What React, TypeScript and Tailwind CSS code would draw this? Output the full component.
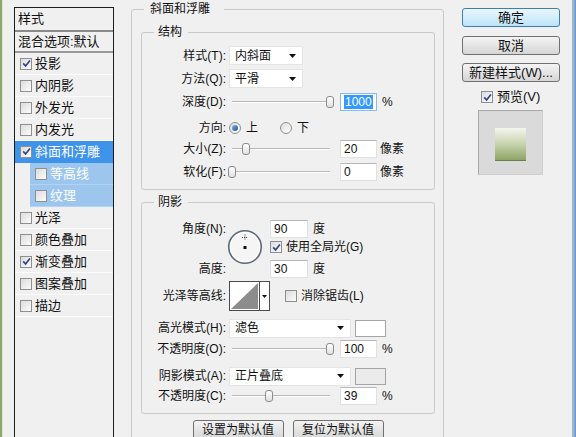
import React from "react";

const styleItems = [
    { name: "投影", checked: true },
    { name: "内阴影" },
    { name: "外发光" },
    { name: "内发光" },
    { name: "斜面和浮雕", checked: true, active: true },
    { name: "等高线", sub: true },
    { name: "纹理", sub: true },
    { name: "光泽" },
    { name: "颜色叠加" },
    { name: "渐变叠加", checked: true },
    { name: "图案叠加" },
    { name: "描边" },
];

function CheckBox({ checked = false }: { checked?: boolean }) {
    return (
        <span className="flex h-[12px] w-[12px] shrink-0 items-center justify-center border border-[#8e8f8f] bg-gradient-to-br from-[#dcdcdc] to-[#fcfcfc]">
            {checked && (
                <svg width="9" height="9" viewBox="0 0 9 9">
                    <path d="M1.2 4.4 L3.6 6.9 L7.9 1.4" fill="none" stroke="#31468c" strokeWidth="1.7" />
                </svg>
            )}
        </span>
    );
}

function Radio({ checked = false }: { checked?: boolean }) {
    return (
        <span className="flex h-[12px] w-[12px] shrink-0 items-center justify-center rounded-full border border-[#8e8f8f] bg-gradient-to-br from-[#dcdcdc] to-white">
            {checked && <span className="h-[6px] w-[6px] rounded-full bg-gradient-to-br from-[#7ab8ec] to-[#1b4f8c]" />}
        </span>
    );
}

function Slider({ value }: { value: number }) {
    const center = 3 + value * 98;
    return (
        <div className="relative h-[18px] w-[104px] shrink-0">
            <div className="absolute left-[3px] right-[3px] top-[8px] h-[2px] border-t border-b border-t-[#b8b8b8] border-b-white" />
            <div
                className="absolute top-[3px] h-[12px] w-[8px] rounded-[3px] border border-[#8c8c8c] bg-gradient-to-b from-white to-[#e0e0e0]"
                style={{ left: center - 4 }}
            />
        </div>
    );
}

function Select({ text, className }: { text: string; className: string }) {
    return (
        <div className={`flex h-[19px] items-center justify-between border border-[#e4e4e4] bg-white pl-[5px] pr-[6px] ${className}`}>
            <span>{text}</span>
            <svg width="7" height="4" viewBox="0 0 7 4">
                <path d="M0 0H7L3.5 4Z" fill="#111" />
            </svg>
        </div>
    );
}

function NumBox({ v, selected = false, className = "w-[37px]" }: { v: string; selected?: boolean; className?: string }) {
    return (
        <div
            className={`flex h-[18px] shrink-0 items-center border bg-white pl-[3px] ${
                selected ? "border-[#8cbbe8]" : "border-[#dde1e6] border-t-[#b5b7bc]"
            } ${className}`}
        >
            {selected ? <span className="bg-[#3399ff] px-[1px] leading-[14px] text-white">{v}</span> : v}
        </div>
    );
}

function Row({ label, className = "", children }: { label: string; className?: string; children?: React.ReactNode }) {
    return (
        <div className={`flex items-center ${className}`}>
            <span className="mr-[3px] w-[84px] shrink-0 text-right">{label}</span>
            {children}
        </div>
    );
}

function Btn({ children, primary = false, className = "" }: { children: React.ReactNode; primary?: boolean; className?: string }) {
    return (
        <div
            className={`flex items-center justify-center rounded-[3px] border ${
                primary
                    ? "border-[#3c7fb1] bg-gradient-to-b from-[#eaf6fd] to-[#bde4f8]"
                    : "border-[#707070] bg-gradient-to-b from-[#f4f4f4] to-[#d6d6d6]"
            } ${className}`}
        >
            {children}
        </div>
    );
}

function StyleList() {
    return (
        <div className="ml-[11px] mt-[7px] h-[440px] w-[100px] shrink-0 border-x border-t border-[#1c1c1c] bg-[#f0f0f0] text-[13px]">
            <div className="flex h-[24px] items-center border-b-2 border-[#8a8a8a] pl-[3px]">样式</div>
            <div className="flex h-[21px] items-center border-b-2 border-[#9a9a9a] pl-[3px]">混合选项:默认</div>
            {styleItems.map((item) =>
                item.sub ? (
                    <div key={item.name} className="flex h-[22px]">
                        <div className="ml-[15px] flex flex-1 items-center gap-[3px] border-b border-[#b4d2f2] bg-[#9cc6ee] pl-[5px] text-white">
                            <CheckBox />
                            <span>{item.name}</span>
                        </div>
                    </div>
                ) : (
                    <div
                        key={item.name}
                        className={`flex h-[22px] items-center gap-[3px] border-b pl-[5px] ${
                            item.active ? "border-[#3d94ea] bg-[#3d94ea] text-white" : "border-[#fbfbfb]"
                        }`}
                    >
                        <CheckBox checked={item.checked} />
                        <span>{item.name}</span>
                    </div>
                )
            )}
        </div>
    );
}

function Structure() {
    return (
        <fieldset className="mt-[9px] w-[294px] rounded-[3px] border border-[#c9c9c9] pb-[8px]">
            <legend className="ml-[12px] pl-[4px] pr-[6px] leading-[14px]">结构</legend>
            <Row label="样式(T):" className="mt-[7px] h-[19px]">
                <Select text="内斜面" className="w-[74px]" />
            </Row>
            <Row label="方法(Q):" className="mt-[4px] h-[19px]">
                <Select text="平滑" className="w-[74px]" />
            </Row>
            <Row label="深度(D):" className="mt-[5px] h-[18px]">
                <Slider value={1} />
                <NumBox v="1000" selected className="ml-[7px] w-[37px]" />
                <span className="ml-[5px]">%</span>
            </Row>
            <Row label="方向:" className="mt-[8px] h-[18px]">
                <Radio checked />
                <span className="ml-[5px]">上</span>
                <span className="ml-[22px]">
                    <Radio />
                </span>
                <span className="ml-[5px]">下</span>
            </Row>
            <Row label="大小(Z):" className="mt-[3px] h-[18px]">
                <Slider value={0.14} />
                <NumBox v="20" className="ml-[7px] w-[37px]" />
                <span className="ml-[3px]">像素</span>
            </Row>
            <Row label="软化(F):" className="mt-[5px] h-[18px]">
                <Slider value={0} />
                <NumBox v="0" className="ml-[7px] w-[37px]" />
                <span className="ml-[3px]">像素</span>
            </Row>
        </fieldset>
    );
}

function Shading() {
    return (
        <fieldset className="mt-[5px] w-[294px] rounded-[3px] border border-[#c9c9c9] pb-[8px]">
            <legend className="ml-[12px] pl-[4px] pr-[6px] leading-[14px]">阴影</legend>
            <div className="mt-[11px] flex h-[58px]">
                <div className="mr-[3px] flex w-[84px] flex-col justify-between text-right">
                    <span className="leading-[18px]">角度(N):</span>
                    <span className="leading-[18px]">高度:</span>
                </div>
                <div className="w-[41px]">
                    <svg className="ml-[-3px] mt-[8px]" width="38" height="38" viewBox="0 0 38 38">
                        <circle cx="19" cy="19" r="16.3" fill="#f5f5f5" stroke="#5d6a78" strokeWidth="1.6" />
                        <circle cx="19" cy="19" r="14.6" fill="none" stroke="#ffffff" strokeWidth="1" />
                        <path d="M19 6.5v6M16 9.5h6" stroke="#444" strokeWidth="1" strokeDasharray="1 1" />
                        <rect x="17.5" y="18" width="3" height="3" fill="#111" />
                    </svg>
                </div>
                <div className="flex flex-col">
                    <div className="flex h-[18px] items-center">
                        <NumBox v="90" className="w-[38px]" />
                        <span className="ml-[5px]">度</span>
                    </div>
                    <div className="mt-[3px] flex h-[12px] items-center gap-[4px]">
                        <CheckBox checked />
                        <span>使用全局光(G)</span>
                    </div>
                    <div className="mt-[7px] flex h-[18px] items-center">
                        <NumBox v="30" className="w-[38px]" />
                        <span className="ml-[5px]">度</span>
                    </div>
                </div>
            </div>
            <Row label="光泽等高线:" className="mt-[3px] h-[30px]">
                <div className="flex h-[30px] w-[41px] border border-[#4a4a4a] bg-white">
                    <svg width="29" height="28" viewBox="0 0 29 28">
                        <path d="M1 27 L28 1 L28 27Z" fill="#8c8c8c" />
                    </svg>
                    <div className="flex flex-1 items-center justify-center border-l border-[#4a4a4a]">
                        <svg width="5" height="3" viewBox="0 0 5 3">
                            <path d="M0 0H5L2.5 3Z" fill="#111" />
                        </svg>
                    </div>
                </div>
                <span className="ml-[15px]">
                    <CheckBox />
                </span>
                <span className="ml-[4px]">消除锯齿(L)</span>
            </Row>
            <Row label="高光模式(H):" className="mt-[7px] h-[20px]">
                <Select text="滤色" className="w-[122px]" />
                <div className="ml-[4px] h-[17px] w-[31px] border border-[#a5a5a5] bg-white" />
            </Row>
            <Row label="不透明度(O):" className="mt-[2px] h-[18px]">
                <Slider value={1} />
                <NumBox v="100" className="ml-[7px] w-[37px]" />
                <span className="ml-[5px]">%</span>
            </Row>
            <Row label="阴影模式(A):" className="mt-[8px] h-[20px]">
                <Select text="正片叠底" className="w-[122px]" />
                <div className="ml-[4px] h-[17px] w-[31px] border border-[#a5a5a5] bg-[#ebebeb]" />
            </Row>
            <Row label="不透明度(C):" className="mt-[1px] h-[18px]">
                <Slider value={0.38} />
                <NumBox v="39" className="ml-[7px] w-[37px]" />
                <span className="ml-[5px]">%</span>
            </Row>
        </fieldset>
    );
}

export default function App() {
    return (
        <div className="flex h-[437px] w-[576px] overflow-hidden bg-[#f0f0f0] font-['Liberation_Sans','Noto_Sans_CJK_SC',sans-serif] text-[12px] text-[#111]">
            <div className="w-[2px] shrink-0 bg-[#8ea66b]" />
            <div className="w-[1px] shrink-0 bg-[#dfe7d2]" />
            <StyleList />

            <fieldset className="ml-[17px] mt-[2px] h-[470px] w-[313px] shrink-0 rounded-[3px] border border-[#c9c9c9] pl-[9px] pr-[8px]">
                <legend className="ml-[3px] pl-[6px] pr-[14px] leading-[14px]">斜面和浮雕</legend>
                <Structure />
                <Shading />
                <div className="mt-[6px] flex justify-center gap-[9px]">
                    <Btn className="h-[20px] w-[91px] leading-[14px]">设置为默认值</Btn>
                    <Btn className="h-[20px] w-[91px] leading-[14px]">复位为默认值</Btn>
                </div>
            </fieldset>

            <div className="ml-[18px] flex w-[98px] shrink-0 flex-col text-[13px]">
                <Btn primary className="mt-[8px] h-[19px]">确定</Btn>
                <Btn className="mt-[9px] h-[19px]">取消</Btn>
                <Btn className="mt-[8px] h-[19px]">新建样式(W)...</Btn>
                <div className="ml-[19px] mt-[9px] flex h-[12px] items-center gap-[4px]">
                    <CheckBox checked />
                    <span>预览(V)</span>
                </div>
                <div className="ml-[16px] mt-[7px] h-[65px] w-[65px] border border-[#d0d0d0] border-l-[#a8a8a8] border-t-[#a8a8a8] bg-[#dadada] pl-[16px] pt-[17px]">
                    <div className="h-[33px] w-[31px] border-b border-[#6c7f4a] bg-gradient-to-b from-[#f4f6ef] via-[#c7d4ad] to-[#8ea466]" />
                </div>
            </div>

            <div className="flex-1" />
            <div className="w-[1px] shrink-0 bg-[#b0b0b0]" />
            <div className="w-[3px] shrink-0 bg-gradient-to-r from-[#9bc0e6] to-[#5f93cc]" />
        </div>
    );
}
